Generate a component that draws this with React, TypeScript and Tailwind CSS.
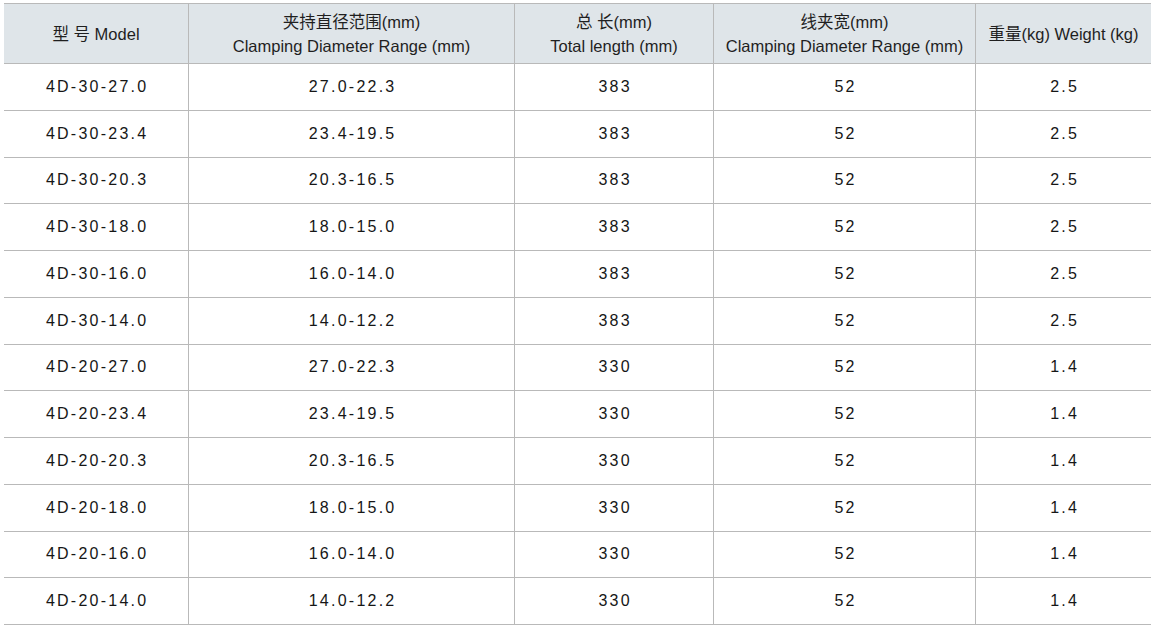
import React from 'react';

type Row = { model: string; range: string; length: string; width: string; weight: string };

const rows: Row[] = [
  { model: '4D-30-27.0', range: '27.0-22.3', length: '383', width: '52', weight: '2.5' },
  { model: '4D-30-23.4', range: '23.4-19.5', length: '383', width: '52', weight: '2.5' },
  { model: '4D-30-20.3', range: '20.3-16.5', length: '383', width: '52', weight: '2.5' },
  { model: '4D-30-18.0', range: '18.0-15.0', length: '383', width: '52', weight: '2.5' },
  { model: '4D-30-16.0', range: '16.0-14.0', length: '383', width: '52', weight: '2.5' },
  { model: '4D-30-14.0', range: '14.0-12.2', length: '383', width: '52', weight: '2.5' },
  { model: '4D-20-27.0', range: '27.0-22.3', length: '330', width: '52', weight: '1.4' },
  { model: '4D-20-23.4', range: '23.4-19.5', length: '330', width: '52', weight: '1.4' },
  { model: '4D-20-20.3', range: '20.3-16.5', length: '330', width: '52', weight: '1.4' },
  { model: '4D-20-18.0', range: '18.0-15.0', length: '330', width: '52', weight: '1.4' },
  { model: '4D-20-16.0', range: '16.0-14.0', length: '330', width: '52', weight: '1.4' },
  { model: '4D-20-14.0', range: '14.0-12.2', length: '330', width: '52', weight: '1.4' },
];

const gridCols = 'grid grid-cols-[184px_326px_199px_262px_176px]';

// header labels: chinese line + english line
const headers: { zh: string; en?: string }[] = [
  { zh: '型 号 Model' },
  { zh: '夹持直径范围(mm)', en: 'Clamping Diameter Range (mm)' },
  { zh: '总 长(mm)', en: 'Total length (mm)' },
  { zh: '线夹宽(mm)', en: 'Clamping Diameter Range (mm)' },
  { zh: '重量(kg) Weight (kg)' },
];

export default function App() {
  return (
    <div className="w-[1151px] h-[628px] bg-white pt-[3px] pl-[4px] overflow-hidden">
      <div className="w-[1147px] border-t border-[#b9b9b9]">
        <div
          className={`${gridCols} h-[60px] bg-[#dfe5e9] border-b border-[#b9b9b9] text-[#1f1f1f] text-[16.5px] leading-[24px]`}
          style={{ fontFamily: '"Liberation Sans", "Noto Sans CJK SC", sans-serif' }}
        >
          {headers.map((h, i) => (
            <div
              key={i}
              className={`flex flex-col items-center justify-center text-center whitespace-nowrap ${i > 0 ? 'border-l border-[#b9b9b9]' : ''}`}
            >
              <span>{h.zh}</span>
              {h.en && <span>{h.en}</span>}
            </div>
          ))}
        </div>

        {rows.map((r, idx) => (
          <div
            key={idx}
            className={`${gridCols} h-[46.75px] border-b border-[#b9b9b9] text-[#161616] text-[16px] tracking-[0.14em] tabular-nums`}
            style={{ fontFamily: '"Liberation Sans", sans-serif' }}
          >
            <div className="flex items-center justify-center pl-[0.14em]">{r.model}</div>
            <div className="flex items-center justify-center pl-[0.14em] border-l border-[#b9b9b9]">{r.range}</div>
            <div className="flex items-center justify-center pl-[0.14em] border-l border-[#b9b9b9]">{r.length}</div>
            <div className="flex items-center justify-center pl-[0.14em] border-l border-[#b9b9b9]">{r.width}</div>
            <div className="flex items-center justify-center pl-[0.14em] border-l border-[#b9b9b9]">{r.weight}</div>
          </div>
        ))}
      </div>
    </div>
  );
}
